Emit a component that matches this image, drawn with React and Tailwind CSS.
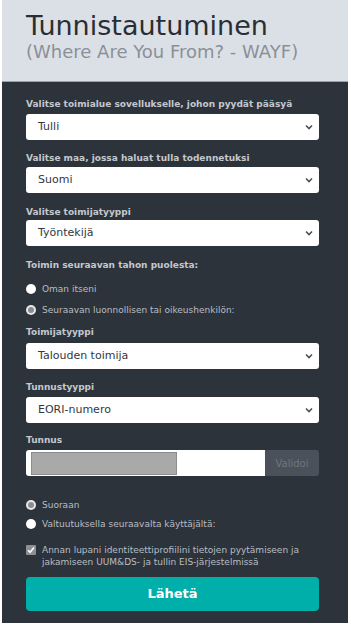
import React from "react";

const font = { fontFamily: '"DejaVu Sans", Verdana, sans-serif' };

const Chevron = () => (
  <svg width="8" height="6" viewBox="0 0 8 6" className="shrink-0">
    <path d="M1 1.5 L4 4.5 L7 1.5" fill="none" stroke="#4b5058" strokeWidth="1.6" />
  </svg>
);

const Select = ({ value }) => (
  <div className="flex h-[26px] w-[293px] items-center justify-between rounded-[3px] bg-white pl-[12px] pr-[6px] text-[11px] text-[#33383e]">
    <span>{value}</span>
    <Chevron />
  </div>
);

const Label = ({ children, className = "" }) => (
  <p className={`text-[9px] font-bold leading-[12px] text-[#c3c8ce] ${className}`}>{children}</p>
);

const Radio = ({ checked, label, className = "" }) => (
  <div className={`flex items-center gap-[6px] text-[9px] leading-[12px] text-[#b8bdc3] ${className}`}>
    {checked ? (
      <span className="flex h-[10px] w-[10px] items-center justify-center rounded-full bg-[#e8e8e8]">
        <span className="h-[6px] w-[6px] rounded-full bg-[#8a8d91]" />
      </span>
    ) : (
      <span className="h-[10px] w-[10px] rounded-full bg-white" />
    )}
    <span>{label}</span>
  </div>
);

const App = () => {
  return (
    <div className="min-h-screen w-[351px] bg-white" style={font}>
      <div className="ml-[2px] w-[346px]">
        <div className="h-[82px] border-b border-[#9aa2aa] bg-[#dbe0e7] pl-[24px] pt-[9px]">
          <h1 className="text-[27px] leading-[33px] text-[#2a2e33]">Tunnistautuminen</h1>
          <p className="text-[18px] leading-[20px] text-[#8b9096]">(Where Are You From? - WAYF)</p>
        </div>

        <div className="bg-[#2d333b] pb-[12px] pl-[24px] pr-[29px] pt-[16px]">
          <Label>Valitse toimialue sovellukselle, johon pyydät pääsyä</Label>
          <div className="mt-[4px]">
            <Select value="Tulli" />
          </div>

          <Label className="mt-[12px]">Valitse maa, jossa haluat tulla todennetuksi</Label>
          <div className="mt-[3px]">
            <Select value="Suomi" />
          </div>

          <Label className="mt-[13px]">Valitse toimijatyyppi</Label>
          <div className="mt-[2px]">
            <Select value="Työntekijä" />
          </div>

          <Label className="mt-[13px]">Toimin seuraavan tahon puolesta:</Label>
          <Radio className="mt-[12px]" label="Oman itseni" />
          <Radio className="mt-[9px]" checked label="Seuraavan luonnollisen tai oikeushenkilön:" />

          <Label className="mt-[10px]">Toimijatyyppi</Label>
          <div className="mt-[5px]">
            <Select value="Talouden toimija" />
          </div>

          <Label className="mt-[12px]">Tunnustyyppi</Label>
          <div className="mt-[4px]">
            <Select value="EORI-numero" />
          </div>

          <Label className="mt-[11px]">Tunnus</Label>
          <div className="mt-[4px] flex h-[26px] w-[293px]">
            <div className="flex flex-1 items-center rounded-l-[3px] bg-white pl-[5px]">
              <div className="h-[23px] w-[146px] border border-[#8d8d8d] bg-[#a9a9a9]" />
            </div>
            <div className="flex w-[54px] items-center justify-center rounded-r-[3px] bg-[#4a515a] text-[10px] text-[#6f767e]">
              Validoi
            </div>
          </div>

          <Radio className="mt-[23px]" checked label="Suoraan" />
          <Radio className="mt-[7px]" label="Valtuutuksella seuraavalta käyttäjältä:" />

          <div className="mt-[14px] flex gap-[6px] text-[9px] leading-[12px] text-[#b8bdc3]">
            <span className="mt-[1px] flex h-[10px] w-[10px] shrink-0 items-center justify-center rounded-[1px] bg-[#8c9095]">
              <svg width="8" height="8" viewBox="0 0 8 8">
                <path d="M1 4.2 L3.1 6.3 L7 1.5" fill="none" stroke="#fff" strokeWidth="1.5" />
              </svg>
            </span>
            <span>
              Annan lupani identiteettiprofiilini tietojen pyytämiseen ja jakamiseen UUM&amp;DS- ja tullin EIS-järjestelmissä
            </span>
          </div>

          <button
            type="button"
            className="mt-[9px] flex h-[34px] w-[293px] items-center justify-center rounded-[4px] bg-[#00aeaa] text-[13px] font-bold text-white"
          >
            Lähetä
          </button>
        </div>
      </div>
    </div>
  );
};

export default App;
